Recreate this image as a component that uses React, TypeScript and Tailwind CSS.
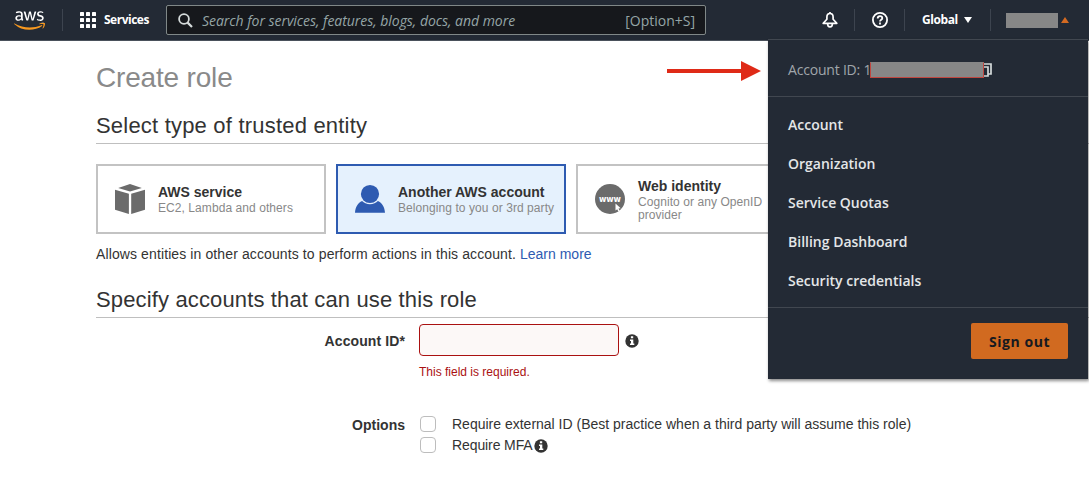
import type { ReactNode } from "react";
import { FaAws } from "react-icons/fa";

const ember = "font-['Open_Sans','Noto_Sans',sans-serif]";

function AwsLogo() {
  return (
    <div className="ml-[14px] w-[31px] shrink-0">
      <svg width="0" height="0" className="absolute">
        <defs>
          <linearGradient id="aws-fill" gradientUnits="userSpaceOnUse" x1="0" y1="0" x2="0" y2="512">
            <stop offset="0.615" stopColor="#ffffff" />
            <stop offset="0.615" stopColor="#f7981f" />
          </linearGradient>
        </defs>
      </svg>
      <FaAws fill="url(#aws-fill)" className="block h-[25px] w-[31px]" />
    </div>
  );
}

function Divider({ className = "" }: { className?: string }) {
  return <div className={`h-[22px] w-px shrink-0 bg-[#3d444f] ${className}`} />;
}

function GridIcon() {
  const steps = [0, 6, 12];
  return (
    <svg width="16" height="16" viewBox="0 0 16 16" fill="#fff">
      {steps.map((y) => steps.map((x) => <rect key={`${x}-${y}`} x={x} y={y} width="4" height="4" rx="0.6" />))}
    </svg>
  );
}

function InfoIcon() {
  return (
    <svg width="14" height="14" viewBox="0 0 14 14" className="block shrink-0">
      <circle cx="7" cy="7" r="6.7" fill="#333" />
      <path d="M5.9 2.3h2.3v1.9H5.9zM5 5.4h3.3v4.1h1v1.6H5V9.500h1V7H5z" fill="#fff" />
    </svg>
  );
}

function CubeIcon() {
  return (
    <svg width="30" height="30" viewBox="0 0 30 30" fill="#6b6b6b">
      <path d="M15 0 26.800 3.900 15 7.500 3.200 3.900z" />
      <path d="M0 5.800 13.900 9.800V30L0 25.700z" />
      <path d="M30 5.800 16.200 9.800V30L30 25.700z" />
    </svg>
  );
}

function PersonIcon() {
  return (
    <svg width="30" height="30" viewBox="0 0 30 30" fill="#2e5bb1">
      <circle cx="15" cy="10" r="9.100" />
      <path d="M0 28.700c.3-5.300 3-9.700 7.100-11.600 1.800 2 4.600 3.200 7.900 3.200s6.100-1.200 7.900-3.200C27 19 29.700 23.400 30 28.700z" />
    </svg>
  );
}

function WebIcon() {
  return (
    <svg width="30" height="30" viewBox="0 0 30 30">
      <circle cx="15" cy="15" r="15" fill="#6b6b6b" />
      <text x="15" y="17.500" textAnchor="middle" textLength="22" fontFamily="DejaVu Sans" fontWeight="bold" fontSize="8" fill="#fff">
        www
      </text>
      <path d="M20.500 19.500v7l1.700-1.300 1.200 2.300 1.300-.7-1.200-2.200 2.200-.4z" fill="#fff" />
    </svg>
  );
}

function EntityCard({ icon, title, children, selected }: { icon: ReactNode; title: string; children: ReactNode; selected?: boolean }) {
  return (
    <div
      className={`flex h-[70px] w-[230px] shrink-0 items-center border-2 pl-[17px] ${
        selected ? "border-[#2e5bb1] bg-[#e5f1fd]" : "border-[#c3c3c3] bg-white"
      }`}
    >
      <div className="w-[30px] shrink-0">{icon}</div>
      <div className="ml-[13px] whitespace-nowrap">
        <div className="pb-px text-[14px] leading-[18px] font-bold text-[#333]">{title}</div>
        <div className="text-[12px] leading-[13px] tracking-[0.07px] text-[#888]">{children}</div>
      </div>
    </div>
  );
}

function Header() {
  return (
    <header className={`flex h-[41px] items-center border-b border-[#4a515b] bg-[#232a35] text-white ${ember}`}>
      <AwsLogo />
      <Divider className="ml-[17px]" />
      <div className="ml-[17px] flex shrink-0 items-center gap-2">
        <GridIcon />
        <span className="w-[45px] text-[12px] leading-4 font-bold tracking-[-0.5px]">Services</span>
      </div>
      <div className="ml-[17px] flex h-[30px] w-[540px] shrink-0 items-center rounded-[2px] border border-[#808888] bg-[#16181c] pr-[10px] pl-[11px] text-[14px] text-[#95a5a6]">
        <svg width="15" height="15" viewBox="0 0 15 15" fill="none" stroke="#d5dbdb" strokeWidth="1.800">
          <circle cx="6" cy="6" r="4.900" />
          <path d="m9.600 9.600 4.400 4.400" strokeWidth="2.200" />
        </svg>
        <span className="ml-[9px] flex-1 whitespace-nowrap italic font-medium tracking-[-0.04px]">Search for services, features, blogs, docs, and more</span>
        <span className="whitespace-nowrap font-medium">[Option+S]</span>
      </div>
      <svg className="ml-[116px] shrink-0" width="16" height="16" viewBox="0 0 16 16" fill="none" stroke="#fff" strokeWidth="1.700" strokeLinejoin="round">
        <path d="M8 1.500c-2 0-3.100 1.500-3.100 3.500v2.200L1.200 11.300h13.600L11.100 7.200V5C11.100 3 10 1.500 8 1.500z" />
        <path d="M5.600 11.500c0 2 1.100 3.400 2.400 3.400s2.400-1.400 2.400-3.400" />
        <path d="M8 0v1.500" />
      </svg>
      <Divider className="ml-[16px]" />
      <svg className="ml-[17px] shrink-0" width="16" height="16" viewBox="0 0 16 16" fill="none" stroke="#fff" strokeWidth="1.800">
        <circle cx="8" cy="8" r="7.100" />
        <path d="M5.700 6.600C5.700 5 6.600 4.200 8 4.200s2.300.8 2.300 2c0 1.500-2.300 1.600-2.300 3.300M8 10.600v1.800" />
      </svg>
      <Divider className="ml-[16px]" />
      <span className="ml-[17px] w-[36px] shrink-0 text-[12px] font-bold tracking-[-0.4px]">Global</span>
      <svg className="ml-[6px] shrink-0" width="8" height="6" viewBox="0 0 8 6" fill="#fff">
        <path d="M0 0h8L4 6z" />
      </svg>
      <Divider className="ml-[18px]" />
      <div className="ml-[15px] h-[15px] w-[52px] shrink-0 bg-[#878787]" />
      <svg className="ml-[3px] shrink-0" width="8" height="6" viewBox="0 0 8 6" fill="#d46a22">
        <path d="M0 6h8L4 0z" />
      </svg>
    </header>
  );
}

const links = ["Account", "Organization", "Service Quotas", "Billing Dashboard", "Security credentials"];

function AccountMenu() {
  return (
    <div className={`absolute top-[39px] right-px h-[340px] w-[320px] border-t border-[#414750] bg-[#232a35] text-[14px] shadow-[1px_2px_3px_0_rgba(0,0,0,0.45)] ${ember}`}>
      <div className="flex h-[57px] items-center border-b border-[#414750] pl-5 pt-[4px] text-[#a0a6ab]">
        <span className="w-[82px] whitespace-nowrap text-[14px] leading-[16px] pb-px font-medium tracking-[-0.2px]">Account ID: 1</span>
        <div className="h-[16px] w-[114px] border border-[#c0463f] border-t-[#878787] bg-[#878787]" />
        <svg width="9" height="14" viewBox="0 0 9 14" fill="none" stroke="#d5dbdb" strokeWidth="1.700">
          <path d="M0 1h7v10H4M0 4h4v9H0" />
        </svg>
      </div>
      <nav className="flex h-[211px] flex-col border-b border-[#414750] pt-[8px] pl-5">
        {links.map((label) => (
          <a key={label} className="h-[39px] text-[14px] leading-[39px] font-semibold text-[#e3e6e8]">
            <span>{label}</span>
          </a>
        ))}
      </nav>
      <div className="flex justify-end pt-[15px] pr-5">
        <button className="h-[36px] w-[97px] rounded-[2px] bg-[#d16a20] text-[14px] font-bold tracking-[0.55px] text-[#16191f]">Sign out</button>
      </div>
    </div>
  );
}

function Checkbox() {
  return <span className="mb-px h-4 w-4 shrink-0 rounded-[4px] border border-[#bdbdbd] bg-white" />;
}

export default function App() {
  return (
    <div className="relative h-[484px] w-[1089px] overflow-hidden bg-white font-['Liberation_Sans',Arial,sans-serif] text-[14px] text-[#333]">
      <Header />
      <main className="pl-[96px]">
        <h1 className="pt-[18px] text-[28px] leading-[38px] tracking-[-0.18px] text-[#8a8a8a]">Create role</h1>
        <h2 className="mt-[13px] h-[34px] border-b border-[#bfbfbf] text-[22px] leading-[32px] tracking-[0.2px]">Select type of trusted entity</h2>
        <div className="mt-5 flex gap-[10px]">
          <EntityCard icon={<CubeIcon />} title="AWS service">EC2, Lambda and others</EntityCard>
          <EntityCard icon={<PersonIcon />} title="Another AWS account" selected>
            Belonging to you or 3rd party
          </EntityCard>
          <EntityCard icon={<WebIcon />} title="Web identity">
            Cognito or any OpenID
            <br />
            provider
          </EntityCard>
        </div>
        <p className="mt-[10px] leading-[20px]">
          <span className="tracking-[0.11px]">Allows entities in other accounts to perform actions in this account. </span>
          <a className="text-[#2e5bb1]">Learn more</a>
        </p>
        <h2 className="mt-5 h-[34px] border-b border-[#bfbfbf] text-[22px] leading-[32px] tracking-[0.14px]">Specify accounts that can use this role</h2>
        <div className="mt-[6px] flex h-8 items-center">
          <label className="w-[309px] pt-[2px] text-right font-bold tracking-[0.1px]">Account ID*</label>
          <input className="ml-[14px] h-8 w-[200px] rounded-[4px] border border-[#aa1111] bg-[#fcf8f7] outline-none" />
          <div className="ml-[6px] pt-px">
            <InfoIcon />
          </div>
        </div>
        <p className="mt-[6px] ml-[323px] text-[12px] leading-[20px] text-[#aa1111]">This field is required.</p>
        <div className="mt-[32px] flex leading-[21px]">
          <div className="w-[309px] pt-px text-right font-bold">Options</div>
          <div className="ml-[15px]">
            <div className="flex h-[21px] items-center">
              <Checkbox />
              <span className="ml-4 whitespace-nowrap">Require external ID (Best practice when a third party will assume this role)</span>
            </div>
            <div className="flex h-[21px] items-center">
              <Checkbox />
              <span className="ml-4 w-[82px] whitespace-nowrap tracking-[-0.1px]">Require MFA</span>
              <div className="pt-px">
                <InfoIcon />
              </div>
            </div>
          </div>
        </div>
      </main>
      <svg className="absolute top-[61px] left-[667px]" width="94" height="20" viewBox="0 0 94 20" fill="#df2a17">
        <path d="M0 8h74V0l20 10-20 10V12H0z" />
      </svg>
      <AccountMenu />
    </div>
  );
}
